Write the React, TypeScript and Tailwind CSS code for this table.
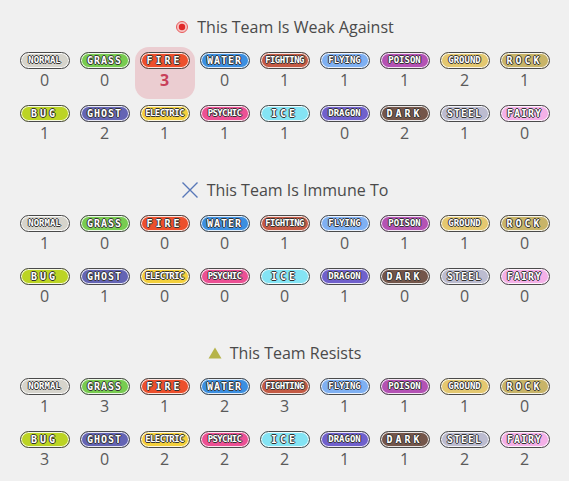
import React from "react";

type TypeDef = { name: string; label: string; bg: string };

const TYPES: TypeDef[] = [
  { name: "normal", label: "NORMAL", bg: "bg-[#d6d4cc]" },
  { name: "grass", label: "GRASS", bg: "bg-[#78cc50]" },
  { name: "fire", label: "FIRE", bg: "bg-[#ec4f2c]" },
  { name: "water", label: "WATER", bg: "bg-[#3c8fe0]" },
  { name: "fighting", label: "FIGHTING", bg: "bg-[#c45a44]" },
  { name: "flying", label: "FLYING", bg: "bg-[#7fb0f2]" },
  { name: "poison", label: "POISON", bg: "bg-[#b452b4]" },
  { name: "ground", label: "GROUND", bg: "bg-[#e4c870]" },
  { name: "rock", label: "ROCK", bg: "bg-[#c8b468]" },
  { name: "bug", label: "BUG", bg: "bg-[#bcd424]" },
  { name: "ghost", label: "GHOST", bg: "bg-[#6464b4]" },
  { name: "electric", label: "ELECTRIC", bg: "bg-[#f4d03c]" },
  { name: "psychic", label: "PSYCHIC", bg: "bg-[#ec5094]" },
  { name: "ice", label: "ICE", bg: "bg-[#84e4f4]" },
  { name: "dragon", label: "DRAGON", bg: "bg-[#7060cc]" },
  { name: "dark", label: "DARK", bg: "bg-[#74564a]" },
  { name: "steel", label: "STEEL", bg: "bg-[#bcbcd0]" },
  { name: "fairy", label: "FAIRY", bg: "bg-[#f4b0e8]" },
];

const SECTIONS: { title: string; icon: "dot" | "cross" | "tri"; counts: number[]; highlight?: number }[] = [
  {
    title: "This Team Is Weak Against",
    icon: "dot",
    counts: [0, 0, 3, 0, 1, 1, 1, 2, 1, 1, 2, 1, 1, 1, 0, 2, 1, 0],
    highlight: 2,
  },
  {
    title: "This Team Is Immune To",
    icon: "cross",
    counts: [1, 0, 0, 0, 1, 0, 1, 1, 0, 0, 1, 0, 0, 0, 1, 0, 0, 0],
  },
  {
    title: "This Team Resists",
    icon: "tri",
    counts: [1, 3, 1, 2, 3, 1, 1, 1, 0, 3, 0, 2, 2, 2, 1, 1, 2, 2],
  },
];

function Icon({ kind }: { kind: "dot" | "cross" | "tri" }) {
  if (kind === "dot") {
    return (
      <svg width="14" height="14" viewBox="0 0 14 14">
        <circle cx="7" cy="7" r="5.5" fill="#f6c4c4" stroke="#e85a5a" strokeWidth="1" />
        <circle cx="7" cy="7" r="3.2" fill="#e02828" />
      </svg>
    );
  }
  if (kind === "cross") {
    return (
      <svg width="18" height="18" viewBox="0 0 18 18">
        <path d="M1.5 1.5 L16.5 16.5 M16.5 1.5 L1.5 16.5" stroke="#5878b8" strokeWidth="1.4" fill="none" />
      </svg>
    );
  }
  return (
    <svg width="14" height="12" viewBox="0 0 14 12">
      <polygon points="7,0.5 13.5,11.5 0.5,11.5" fill="#b6b44a" />
    </svg>
  );
}

function Badge({ t }: { t: TypeDef }) {
  const len = t.label.length;
  const size =
    len <= 4 ? "text-[10px] tracking-[3px]" : len <= 5 ? "text-[10px] tracking-[1px]" : len <= 6 ? "text-[9px] tracking-[0px]" : "text-[9px] tracking-[-0.6px]";
  return (
    <div
      className={`flex h-[17px] w-[50px] items-center justify-center rounded-full border border-[#4a4a4a] ${t.bg} shadow-[inset_0_0_0_1px_rgba(255,255,255,0.85)]`}
    >
      <span
        className={`${size} font-bold leading-none text-white`}
        style={{
          fontFamily: '"DejaVu Sans Mono", monospace',
          textShadow:
            "1px 0 0 #333, -1px 0 0 #333, 0 1px 0 #333, 0 -1px 0 #333",
        }}
      >
        {t.label}
      </span>
    </div>
  );
}

export default function App() {
  return (
    <div
      className="min-h-[481px] w-full bg-[#f0f0f0] pt-[15px] text-[#555]"
      style={{ fontFamily: '"Open Sans", sans-serif' }}
    >
      {SECTIONS.map((s, si) => (
        <section key={s.title} className={si < SECTIONS.length - 1 ? "mb-[26px]" : ""}>
          <div className="flex h-6 items-center justify-center gap-2 text-[16px] leading-6 text-[#4a4a4a]">
            <Icon kind={s.icon} />
            <span>{s.title}</span>
          </div>
          <div className="mx-auto mt-2 grid w-[540px] grid-cols-9 gap-y-px">
            {TYPES.map((t, i) => {
              const hot = s.highlight === i;
              return (
                <div
                  key={t.name}
                  className={`flex h-[52px] flex-col items-center pt-[5px] ${hot ? "rounded-[14px] bg-[#ebcdd1]" : ""}`}
                >
                  <Badge t={t} />
                  <span
                    className={`text-[16px] leading-[22px] ${hot ? "font-bold text-[#c8405a]" : "text-[#5a5a5a]"}`}
                  >
                    {s.counts[i]}
                  </span>
                </div>
              );
            })}
          </div>
        </section>
      ))}
    </div>
  );
}
